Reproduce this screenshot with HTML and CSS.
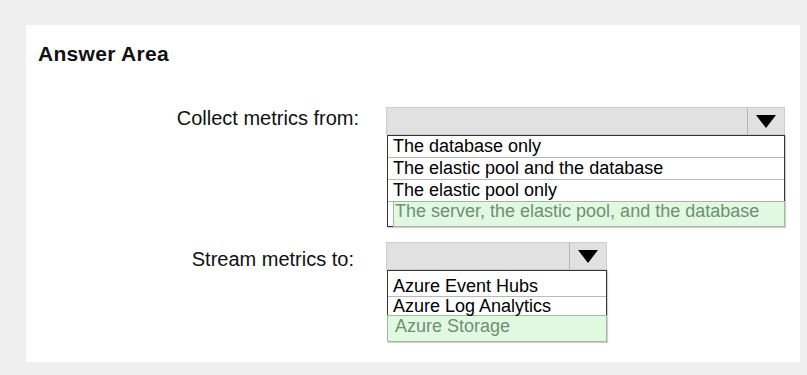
FILE: index.html
```html
<!DOCTYPE html>
<html lang="en">
<head>
<meta charset="utf-8">
<title>Answer Area</title>
<link rel="stylesheet" href="styles.css">
</head>
<body>
<div class="page">
  <section class="panel">
    <h1 class="title">Answer Area</h1>

    <div class="row row-first">
      <div class="label">Collect metrics from:</div>
      <div class="dropdown dd-wide">
        <div class="select">
          <span class="select-field"></span>
          <span class="select-btn">
            <svg width="20" height="13" viewBox="0 0 20 13"><polygon points="0,0 20,0 10,13" fill="#000"/></svg>
          </span>
        </div>
        <ul class="list list-first">
          <li class="opt">The database only</li>
          <li class="opt">The elastic pool and the database</li>
          <li class="opt">The elastic pool only</li>
          <li class="opt opt-selected sel-inset">The server, the elastic pool, and the database</li>
        </ul>
      </div>
    </div>

    <div class="row row-second">
      <div class="label label-second">Stream metrics to:</div>
      <div class="dropdown dd-narrow">
        <div class="select">
          <span class="select-field"></span>
          <span class="select-btn">
            <svg width="20" height="13" viewBox="0 0 20 13"><polygon points="0,0 20,0 10,13" fill="#000"/></svg>
          </span>
        </div>
        <ul class="list list-second">
          <li class="opt opt-lead">Azure Event Hubs</li>
          <li class="opt opt-tight">Azure Log Analytics</li>
          <li class="opt opt-selected sel-full">Azure Storage</li>
        </ul>
      </div>
    </div>
  </section>
</div>
</body>
</html>
```

FILE: styles.css
```css
html, body {
  margin: 0;
  padding: 0;
}

body {
  background: #efefef;
  font-family: "Liberation Sans", Arial, sans-serif;
  color: #000;
}

.page {
  width: 807px;
  height: 375px;
  padding: 25px 0 0 26px;
  box-sizing: border-box;
}

.panel {
  width: 774px;
  height: 337px;
  background: #fff;
  box-sizing: border-box;
  padding: 17px 12px 0 12px;
}

.title {
  margin: 0;
  font-size: 21px;
  line-height: 24px;
  font-weight: bold;
  letter-spacing: 0.3px;
  color: #111;
}

.row {
  display: flex;
  align-items: flex-start;
  gap: 27px;
}

.row-first {
  margin-top: 41px;
}

.row-second {
  margin-top: 15px;
}

.label {
  width: 321px;
  text-align: right;
  font-size: 20px;
  line-height: 23px;
  color: #111;
  flex: none;
}

.label-second {
  margin-top: 6px;
  padding-right: 5px;
  box-sizing: border-box;
}

.dropdown {
  flex: none;
}

.dd-wide {
  width: 399px;
}

.dd-narrow {
  width: 221px;
}

.select {
  display: flex;
  height: 28px;
  box-sizing: border-box;
  border: 1px solid #cdcdcd;
  background: #e1e1e1;
}

.select-field {
  flex: 1;
}

.select-btn {
  width: 36px;
  border-left: 1px solid #b4b4b4;
  display: flex;
  align-items: center;
  justify-content: center;
}

.list {
  list-style: none;
  margin: 0 0 0 1px;
  padding: 0;
  border: 1px solid #333;
  background: #fff;
  box-shadow: 1px 1px 1px rgba(0, 0, 0, 0.18);
}

.opt {
  height: 22px;
  line-height: 22px;
  font-size: 18px;
  padding-left: 5px;
  border-bottom: 1px solid #b9b9b9;
  white-space: nowrap;
}

.list-first .opt {
  height: 21px;
  line-height: 21px;
}

.opt-lead {
  height: 26px;
  padding-top: 4px;
  box-sizing: border-box;
}

.opt-tight {
  height: 18px;
  line-height: 18px;
}

.opt-selected {
  background: #e1f9e1;
  border: 1px solid #9fba9f;
  color: #6f8f74;
  margin-top: -1px;
  margin-bottom: -1px;
}

.list-first .sel-inset {
  margin-left: 5px;
  margin-right: -1px;
  padding-left: 1px;
  height: 18px;
  line-height: 18px;
  padding-bottom: 6px;
}

.sel-full {
  margin-left: -1px;
  margin-right: -1px;
  padding-left: 7px;
  height: 18px;
  line-height: 18px;
  padding-top: 1px;
  padding-bottom: 6px;
}
```
